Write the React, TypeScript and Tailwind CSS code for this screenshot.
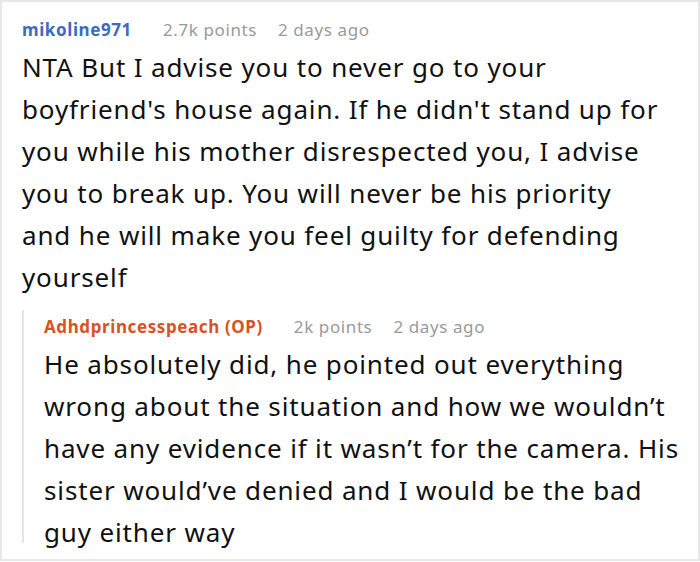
const comment = {
  user: "mikoline971",
  points: "2.7k points",
  time: "2 days ago",
  lines: [
    "NTA But I advise you to never go to your",
    "boyfriend's house again. If he didn't stand up for",
    "you while his mother disrespected you, I advise",
    "you to break up. You will never be his priority",
    "and he will make you feel guilty for defending",
    "yourself",
  ],
};

const reply = {
  user: "Adhdprincesspeach (OP)",
  points: "2k points",
  time: "2 days ago",
  lines: [
    "He absolutely did, he pointed out everything",
    "wrong about the situation and how we wouldn’t",
    "have any evidence if it wasn’t for the camera. His",
    "sister would’ve denied and I would be the bad",
    "guy either way",
  ],
};

function Meta({ user, points, time, color }: { user: string; points: string; time: string; color: string }) {
  return (
    <div className="flex items-baseline text-[17px] leading-[24px] tracking-[0.6px]">
      <span className={`font-bold ${color} mr-[31px]`}>{user}</span>
      <span className="text-[#9a9a9a] mr-[21px]">{points}</span>
      <span className="text-[#9a9a9a]">{time}</span>
    </div>
  );
}

function Body({ lines }: { lines: string[] }) {
  return (
    <p className="mt-[4px] text-[26px] leading-[42px] tracking-[0.86px] text-[#111] whitespace-nowrap">
      {lines.map((l, i) => (
        <span key={i} className="block">
          {l}
        </span>
      ))}
    </p>
  );
}

export default function App() {
  return (
    <div
      className="w-[700px] h-[561px] overflow-hidden bg-white border-2 border-[#e8e8e8] pl-[20px] pr-[10px] pt-[16px]"
      style={{ fontFamily: '"Noto Sans", "Open Sans", sans-serif' }}
    >
      <Meta user={comment.user} points={comment.points} time={comment.time} color="text-[#3b6bc0]" />
      <Body lines={comment.lines} />

      <div className="mt-[12px] h-[233px] border-l-2 border-[#e6e6e6] pl-[20px] pt-[5px]">
        <Meta user={reply.user} points={reply.points} time={reply.time} color="text-[#d8531f]" />
        <Body lines={reply.lines} />
      </div>
    </div>
  );
}
